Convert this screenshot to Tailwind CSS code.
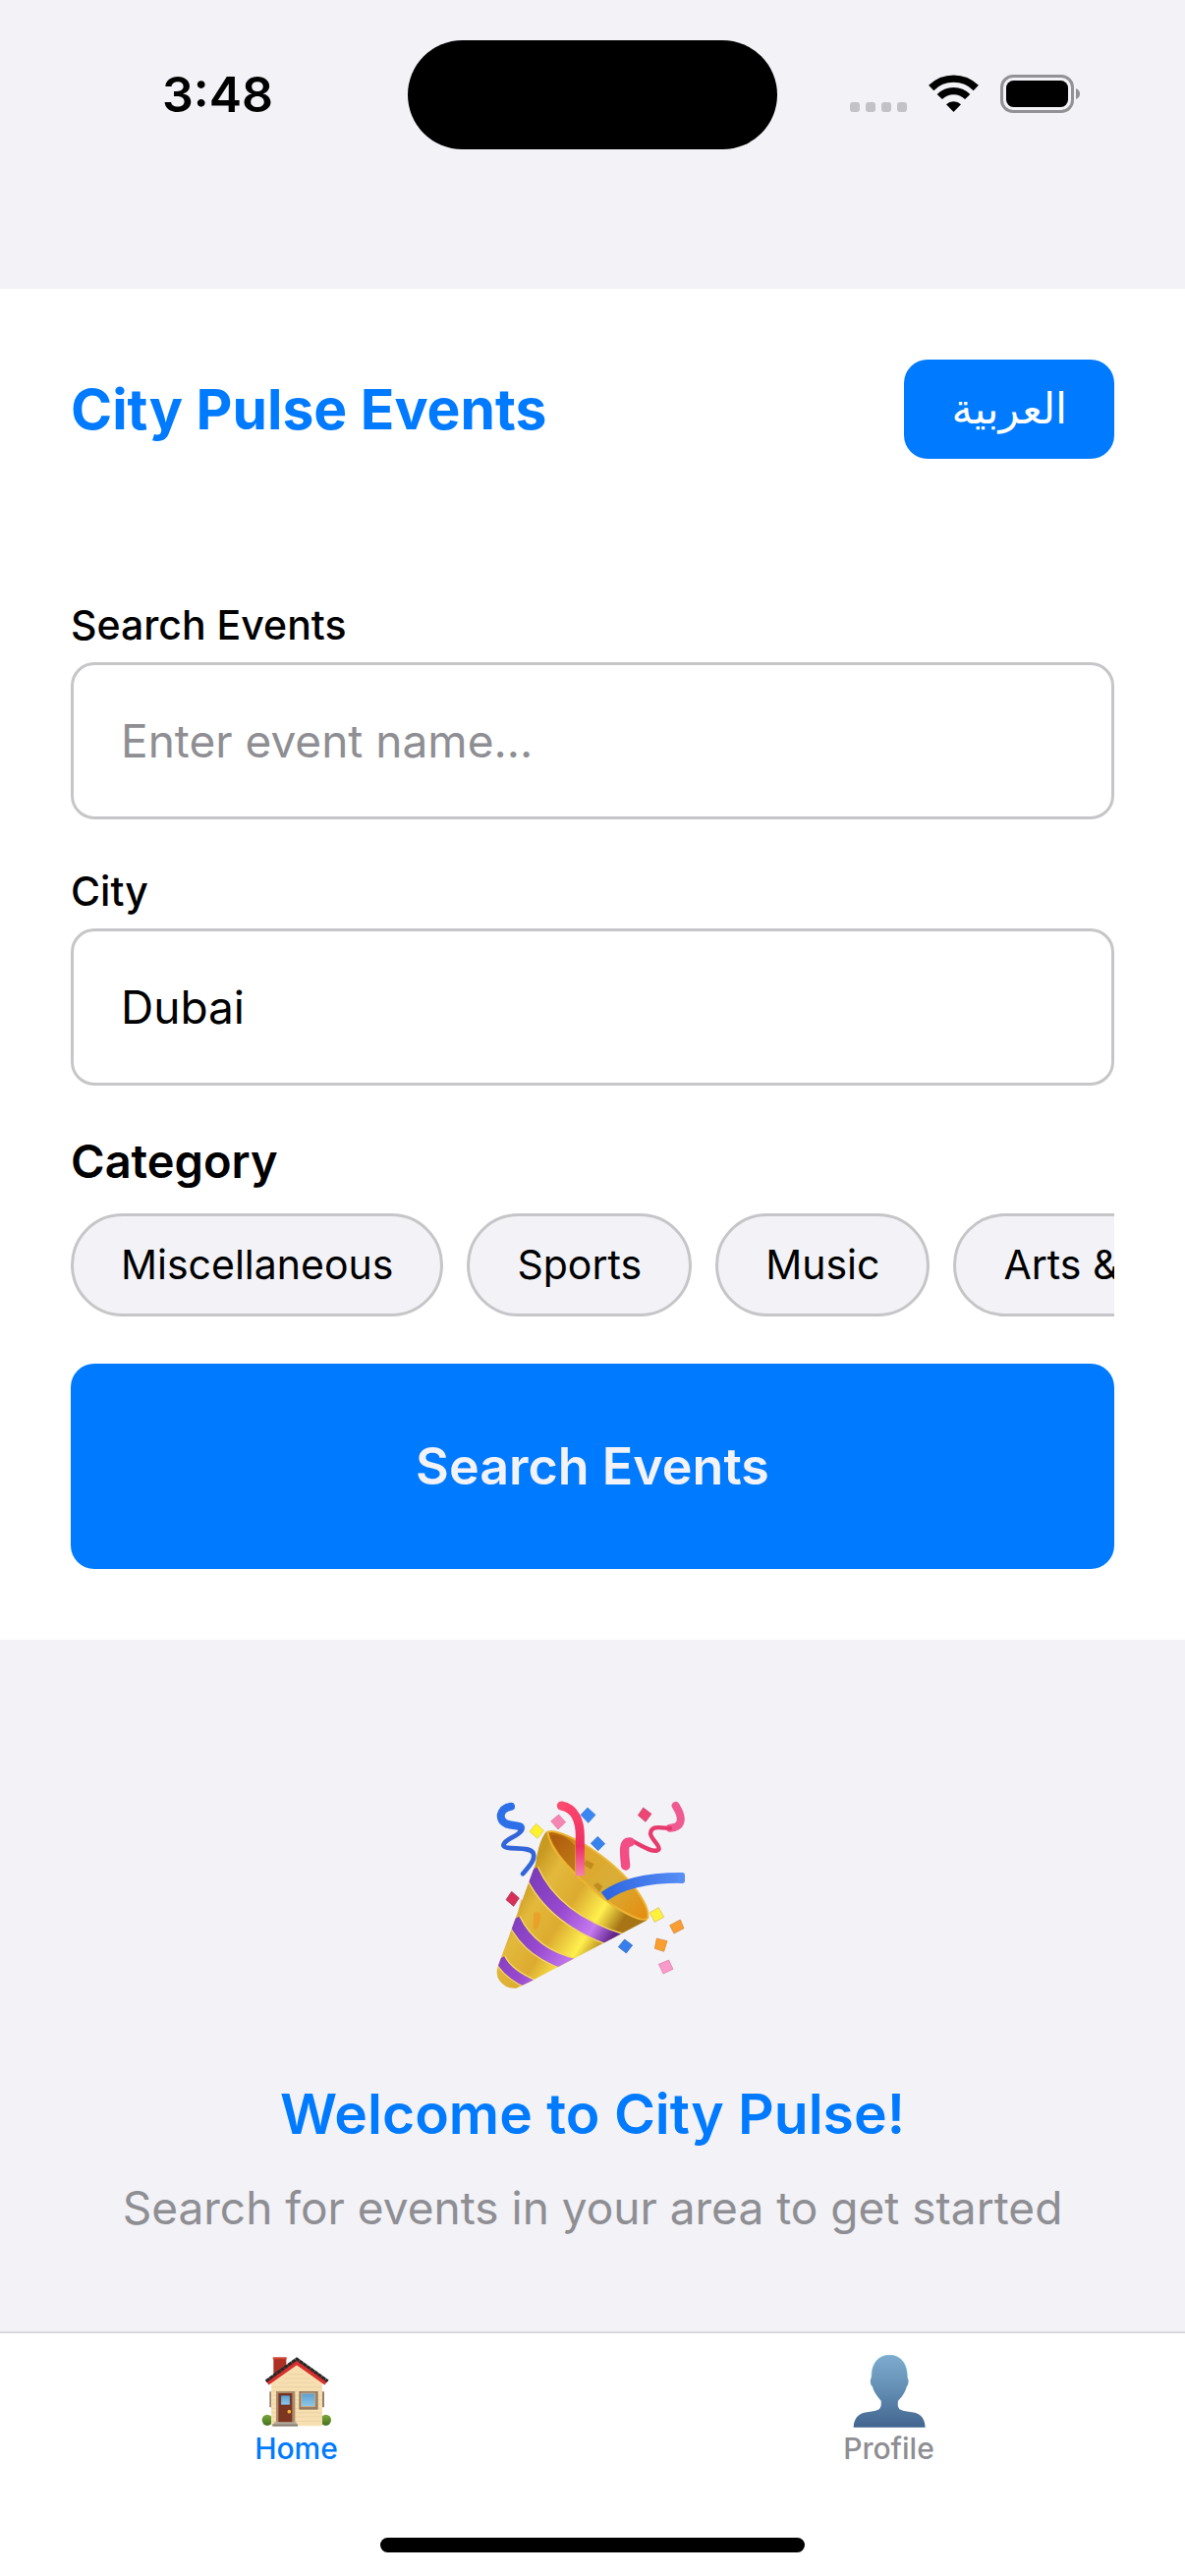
<!DOCTYPE html>
<html lang="en">
<head>
<meta charset="utf-8">
<meta name="viewport" content="width=device-width, initial-scale=1">
<title>City Pulse Events</title>
<script src="https://cdn.jsdelivr.net/npm/@tailwindcss/browser@4"></script>
</head>
<body class="flex min-h-screen flex-col bg-[#f2f2f7] font-['Inter','Noto_Sans',sans-serif] text-black">

  <!-- Status bar -->
  <div class="grid h-[294px] grid-cols-[1fr_376px_1fr] items-start pt-[41px]">
    <div class="flex h-[111px] items-center justify-center pl-7 text-[50px] font-semibold">3:48</div>
    <div class="h-[111px] rounded-full bg-black"></div>
    <div class="flex h-[111px] items-center justify-end pr-[107px]">
      <svg class="h-[43px] w-[237px]" viewBox="0 0 237 43" aria-hidden="true">
        <g fill="#c3c2c7"><rect x="3" y="29" width="10" height="10" rx="3"/><rect x="19" y="29" width="10" height="10" rx="3"/><rect x="35" y="29" width="10" height="10" rx="3"/><rect x="51" y="29" width="10" height="10" rx="3"/></g>
        <g fill="none" stroke="#000" stroke-width="7.4"><path d="M85.7 14.500a32.500 32.500 0 0 1 45.600 0"/><path d="M94.300 23.500a20 20 0 0 1 28.400 0"/></g>
        <path d="M108.500 39l-7.500-7.700a11 11 0 0 1 15 0z"/>
        <rect x="157.500" y="2.500" width="72" height="36" rx="11.500" fill="none" stroke="#929296" stroke-width="3"/>
        <rect x="162" y="7" width="63" height="27" rx="7.500"/>
        <path d="M233 15q4 1.500 4 5.500t-4 5.500z" fill="#929296"/>
      </svg>
    </div>
  </div>

  <main class="flex flex-1 flex-col">
    <div class="bg-white p-[72px]">
      <header class="mb-36 flex items-center justify-between">
        <h1 class="text-[57px] leading-[72px] font-bold text-[#007aff]">City Pulse Events</h1>
        <button type="button" lang="ar" dir="rtl" class="flex h-[101px] items-center rounded-3xl bg-[#007aff] px-12 font-['DejaVu_Sans',sans-serif] text-[43px] font-medium text-white">العربية</button>
      </header>

      <form>
        <label for="event" class="mb-3 block text-[41px] leading-[51px] font-medium">Search Events</label>
        <input id="event" type="text" placeholder="Enter event name..." class="mb-12 block h-40 w-full rounded-3xl border-3 border-[#c6c6c8] bg-white px-12 text-[46px] placeholder:text-[#8e8e93]">
        <label for="city" class="mb-3 block text-[41px] leading-[51px] font-medium">City</label>
        <input id="city" type="text" value="Dubai" class="mb-12 block h-40 w-full rounded-3xl border-3 border-[#c6c6c8] bg-white px-12 text-[46px]">

        <h2 class="mb-6 text-[47px] leading-[58px] font-semibold">Category</h2>
        <div class="mb-12 flex gap-6 overflow-x-auto [scrollbar-width:none]">
          <button type="button" class="h-[105px] shrink-0 rounded-full border-3 border-[#c6c6c8] bg-[#f2f2f7] px-12 text-[41px]">Miscellaneous</button>
          <button type="button" class="h-[105px] shrink-0 rounded-full border-3 border-[#c6c6c8] bg-[#f2f2f7] px-12 text-[41px]">Sports</button>
          <button type="button" class="h-[105px] shrink-0 rounded-full border-3 border-[#c6c6c8] bg-[#f2f2f7] px-12 text-[41px]">Music</button>
          <button type="button" class="h-[105px] shrink-0 rounded-full border-3 border-[#c6c6c8] bg-[#f2f2f7] px-12 text-[41px]">Arts &amp; Theatre</button>
        </div>
        <button type="submit" class="block h-[209px] w-full rounded-3xl bg-[#007aff] text-[52px] font-semibold text-[#f2f2f7]">Search Events</button>
      </form>
    </div>

    <section class="flex flex-1 flex-col items-center px-12 pt-[163px] text-center">
      <svg class="mb-[92px] h-48 w-49" viewBox="75 66 588 576" aria-hidden="true">
        <defs>
          <linearGradient id="cone" x1="150" y1="330" x2="420" y2="500" gradientUnits="userSpaceOnUse"><stop offset="0" stop-color="#c99a22"/><stop offset=".2" stop-color="#e3b93c"/><stop offset=".5" stop-color="#dcab30"/><stop offset=".78" stop-color="#fff04e"/><stop offset="1" stop-color="#a87516"/></linearGradient>
          <linearGradient id="band" x1="150" y1="330" x2="420" y2="500" gradientUnits="userSpaceOnUse"><stop offset="0" stop-color="#7a3bb8"/><stop offset=".45" stop-color="#9849cf"/><stop offset=".8" stop-color="#c57af0"/><stop offset="1" stop-color="#64258e"/></linearGradient>
          <linearGradient id="mouth" x1="240" y1="170" x2="530" y2="430" gradientUnits="userSpaceOnUse"><stop offset="0" stop-color="#b9650d"/><stop offset=".3" stop-color="#dfa52a"/><stop offset=".6" stop-color="#d9ae37"/><stop offset="1" stop-color="#e58c10"/></linearGradient>
          <linearGradient id="blue" x1="400" y1="360" x2="650" y2="300" gradientUnits="userSpaceOnUse"><stop offset="0" stop-color="#2c64e0"/><stop offset="1" stop-color="#578ef5"/></linearGradient>
          <linearGradient id="pink" x1="0" y1="70" x2="0" y2="300" gradientUnits="userSpaceOnUse"><stop offset="0" stop-color="#ff476d"/><stop offset=".6" stop-color="#ec2f61"/><stop offset="1" stop-color="#f583ae"/></linearGradient>
          <clipPath id="body"><path d="M228 163Q205 190 195 262L80 575Q72 600 85 618Q106 645 136 641L180 620L534 434Q500 445 395 362Q270 250 228 163Z"/></clipPath>
        </defs>
        <path d="M228 163Q205 190 195 262L80 575Q72 600 85 618Q106 645 136 641L180 620L534 434Q560 380 228 163Z" fill="url(#cone)"/>
        <g clip-path="url(#body)" fill="none" stroke="#f3d85b">
          <path d="M181 280Q250 435 462 500" stroke-width="51"/><path d="M181 280Q250 435 462 500" stroke="url(#band)" stroke-width="42"/>
          <path d="M128 430Q180 540 320 573" stroke-width="46"/><path d="M128 430Q180 540 320 573" stroke="url(#band)" stroke-width="38"/>
          <path d="M86 550Q110 600 195 635" stroke-width="38"/><path d="M86 550Q110 600 195 635" stroke="url(#band)" stroke-width="30"/>
        </g>
        <path d="M190 410q28-8 18 28t-20 18zM150 370q10 0 2 18t-10 16z" fill="#f48a18" opacity=".45"/>
        <path d="M232 164C250 155 320 180 397 238C470 292 545 380 538 426C529 444 465 415 400 365C320 302 240 225 232 164Z" fill="url(#mouth)" stroke="#edb633" stroke-width="6"/>
        <path d="M240 175Q280 165 315 205L315 285Q258 230 240 175Z" fill="#a45109" opacity=".55"/>
        <path d="M350 250l24 12-10 16-22-14zM372 326l12-8 16 12-10 18z" fill="#ae7911" opacity=".6"/>
        <path d="M274 84C315 91 331 130 331 178V298" fill="none" stroke="url(#pink)" stroke-width="27"/>
        <circle cx="274" cy="84" r="13.500" fill="#fb4c70"/>
        <path d="M405 361Q480 304 638 304" fill="none" stroke="url(#blue)" stroke-width="32"/>
        <rect x="630" y="288" width="21" height="33" rx="8" fill="#578ef5"/>
        <g fill="none" stroke-linecap="round" stroke-linejoin="round">
          <path d="M120 86C85 91 78 128 108 140C130 147 151 143 150 152" stroke="#2c6fe8" stroke-width="24"/>
          <path d="M153 159C138 181 104 182 97 204C99 224 183 202 189 231C194 250 176 269 156 292" stroke="#3265d9" stroke-width="14"/>
          <path d="M623 84C652 130 637 150 606 152" stroke="#ef5b91" stroke-width="24"/>
          <path d="M606 153C577 151 548 143 546 169C546 184 573 201 572 216C560 234 516 204 490 191" stroke="#e73a6d" stroke-width="13"/>
          <path d="M484 195C461 193 466 226 470 267" stroke="#f24d85" stroke-width="28"/>
        </g>
        <g stroke-width="2">
          <path d="M197 139l23 21-19 24-24-21z" fill="#fff12d" stroke="#d7c232"/>
          <path d="M266 111l21 23-23 22-22-25z" fill="#f586b3" stroke="#dc719d"/>
          <path d="M354 90l24 22-22 24-23-24z" fill="#3a86f4" stroke="#3373d0"/>
          <path d="M385 178l22 22-21 21-22-22z" fill="#3784ed" stroke="#3070cb"/>
          <path d="M524 90l25 19-18 24-23-20z" fill="#ec4774" stroke="#c63b61"/>
          <path d="M122 346l23 20-17 25-23-20z" fill="#d82f58" stroke="#a92949"/>
          <path d="M571 395l16 29-28 15-15-29z" fill="#fff23c" stroke="#d6b83d"/>
          <path d="M637 432l11 26-30 16-13-25z" fill="#fa9e34" stroke="#cf8130"/>
          <path d="M565 489l32 8-10 32-28-9z" fill="#fa9f2d" stroke="#d37f28"/>
          <path d="M467 492l24 18-19 24-24-19z" fill="#367fec" stroke="#2d65bd"/>
          <path d="M602 555l13 28-30 14-14-29z" fill="#f99ac8" stroke="#d879a7"/>
        </g>
      </svg>
      <h2 class="mb-6 text-[57px] leading-[72px] font-semibold text-[#007aff]">Welcome to City Pulse!</h2>
      <p class="text-[46px] leading-[70px] text-[#8e8e93]">Search for events in your area to get started</p>
    </section>
  </main>

  <!-- Tab bar -->
  <nav class="flex h-[249px] flex-col justify-between border-t-2 border-[#d8d8dc] bg-white pb-6">
    <div class="flex pt-[21px]">
      <a href="#home" class="flex flex-1 flex-col items-center text-[30px] leading-[42px] font-medium text-[#007aff]">
        <svg class="h-[75px] w-[72px]" viewBox="107 109 216 225" aria-hidden="true">
          <defs><linearGradient id="glass" x1="0" y1="0" x2="0" y2="1"><stop offset="0" stop-color="#5a9fd0"/><stop offset="1" stop-color="#91c8e8"/></linearGradient><linearGradient id="leaf" x1="0" y1="0" x2="0" y2="1"><stop offset="0" stop-color="#7da93d"/><stop offset="1" stop-color="#41701c"/></linearGradient></defs>
          <rect x="144" y="120" width="39" height="55" rx="2" fill="#ad3024"/><path d="M142 119h42v6h-42z" fill="#d44735"/>
          <path d="M132 224h8v48h-8zM290 224h9v48h-9z" fill="#987f6a"/>
          <ellipse cx="125" cy="311" rx="16" ry="17" fill="url(#leaf)"/><ellipse cx="304" cy="311" rx="16" ry="17" fill="url(#leaf)"/>
          <path d="M137 192L215 137L293 192V329H137Z" fill="#f8dfb1"/>
          <path d="M139 210h152M139 223h152M139 236h152M139 249h152M139 262h152M139 275h152M139 288h152M139 301h152M139 314h152M159 197h112M175 184h82M190 171h50" stroke="#dfc69b" stroke-width="1.500"/>
          <path d="M125 197L215 133L305 197" fill="none" stroke="#d72f2d" stroke-width="16"/>
          <path d="M121 192L215 124L310 192" fill="none" stroke="#252829" stroke-width="9" stroke-dasharray="13 1"/>
          <path d="M152 223h58v95h-58z" fill="#aa8c6c"/><path d="M159 229h42v89h-42z" fill="#7c3521"/><path d="M166 235h29v30h-29z" fill="url(#glass)" stroke="#5f291e" stroke-width="2"/><circle cx="192" cy="285" r="5.500" fill="#f2b72d"/>
          <path d="M222 223h58v56h-58z" fill="#967b61"/><path d="M229 229h42v41h-42z" fill="url(#glass)" stroke="#c8ae88" stroke-width="3"/>
          <path d="M146 317h68v6h-68z" fill="#b1a99d"/><path d="M141 323h77v7h-77z" fill="#897f78"/>
        </svg>
        Home
      </a>
      <a href="#profile" class="flex flex-1 flex-col items-center text-[30px] leading-[42px] font-medium text-[#8e8e93]">
        <svg class="h-[75px] w-[74px]" viewBox="112 109 222 225" aria-hidden="true">
          <defs><linearGradient id="person" x1="0" y1="0" x2="0" y2="1"><stop offset="0" stop-color="#7eabcf"/><stop offset=".45" stop-color="#6590b5"/><stop offset="1" stop-color="#42658f"/></linearGradient></defs>
          <path d="M114 333C117 294 138 288 165 285C190 282 201 278 198 252C183 235 174 220 172 209C165 203 163 188 169 180C169 137 190 113 224 113C257 113 278 137 278 180C284 188 282 203 276 209C274 220 265 238 250 252C246 278 256 282 282 285C309 288 331 294 333 333Z" fill="url(#person)"/>
          <path d="M169 180C169 137 190 113 224 113C257 113 278 137 278 180" fill="none" stroke="#65b7d0" stroke-width="2"/>
        </svg>
        Profile
      </a>
    </div>
    <div class="h-[15px] w-[432px] self-center rounded-full bg-black"></div>
  </nav>
</body>
</html>
